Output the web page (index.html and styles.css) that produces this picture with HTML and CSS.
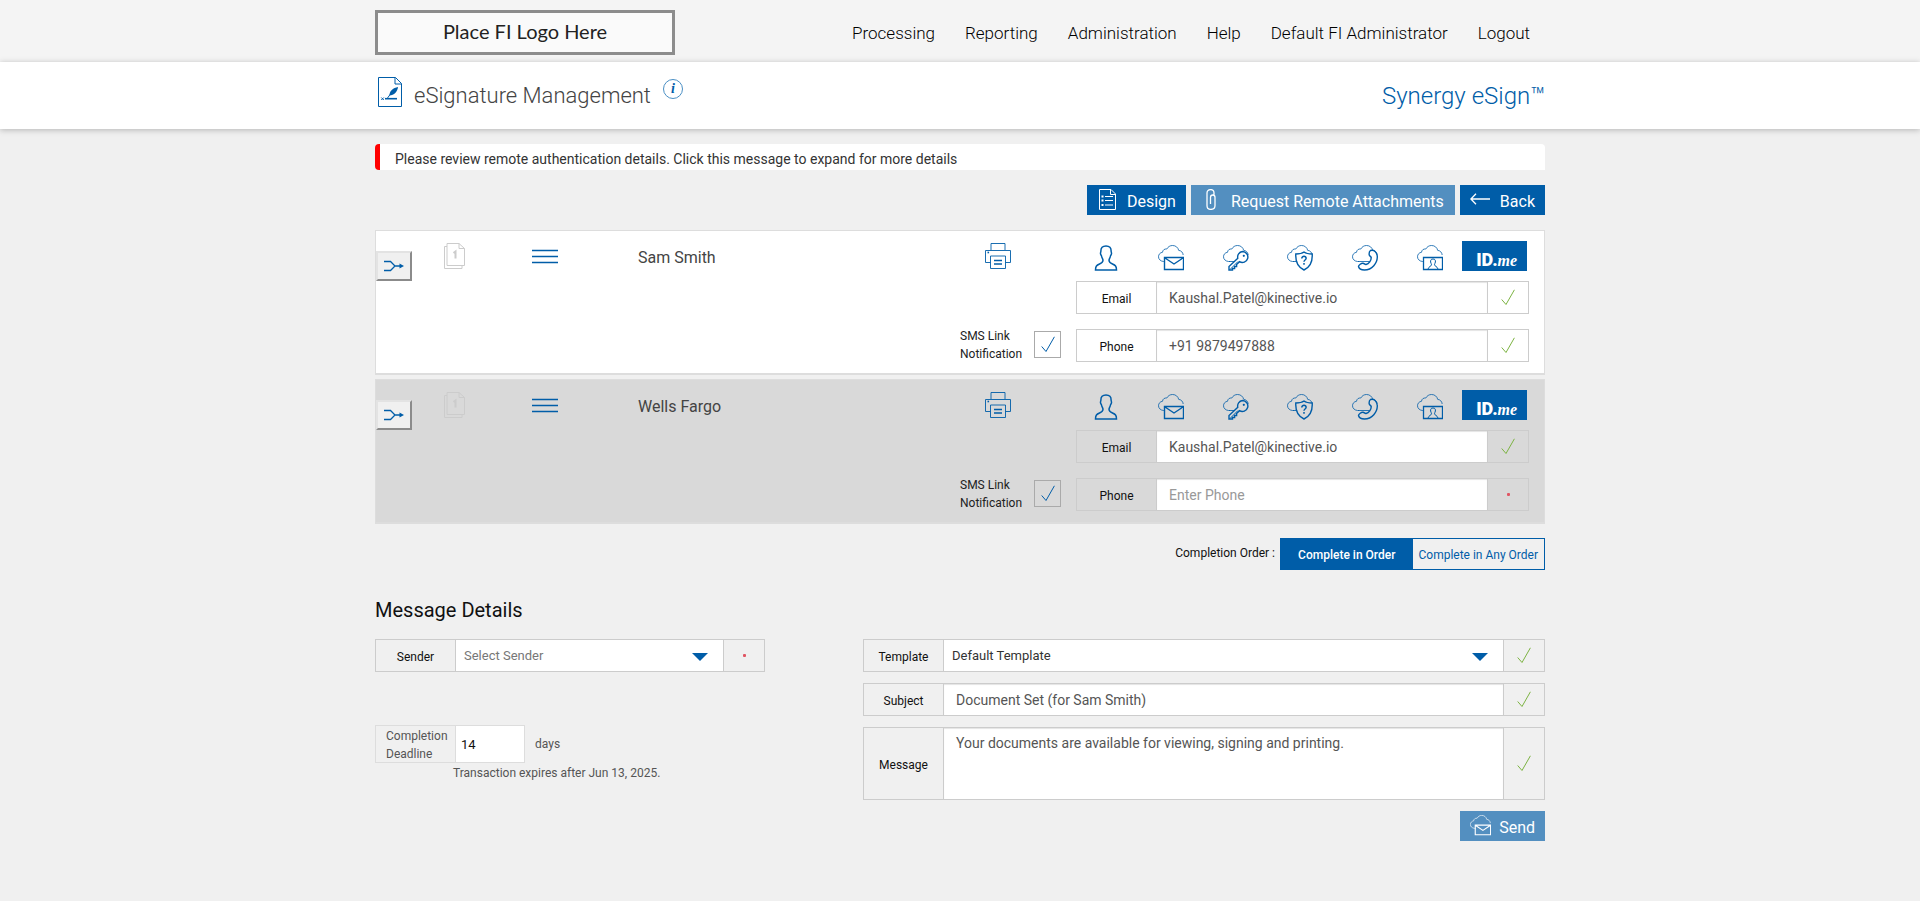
FILE: index.html
```html
<!DOCTYPE html>
<html lang="en">
<head>
  <meta charset="UTF-8" />
  <title>eSignature Management</title>
  <meta name="viewport" content="width=device-width, initial-scale=1.0" />
  <link rel="stylesheet" href="styles.css">
</head>
<body>
  <!-- shared icons -->
  <svg class="sprite" aria-hidden="true">
    <symbol id="i-cloud" viewBox="0 0 26 26">
      <path d="M7 16.500H5.500C2.500 16.200.5 14.200.5 11.800c0-2.400 1.700-4.300 4-4.500C4.700 5 6.500 3.700 8.800 4 10 1.800 12 .5 14.500.5c3.200 0 5.600 2 6.200 4.900 2.500.2 4.200 2 4.500 4.600" stroke-width=".8"/>
    </symbol>
    <symbol id="i-check" viewBox="0 0 14 17">
      <path d="M.7 10.500 5 15.500 13.400.8"/>
    </symbol>
    <symbol id="i-merge" viewBox="0 0 20 12">
      <path d="M0 1.500h6.500L11 6l-4.500 4.500H0M11 6h6"/>
      <path d="M15.500 3.500 20 6l-4.500 2.500z" fill="currentColor" stroke="none"/>
    </symbol>
    <symbol id="i-pages" viewBox="0 0 21 26">
      <path d="M3 3.500H.5v22h17.500V23M3 .5h12l5.500 5V22.500H3zM15 .5v5h5.500"/>
      <path d="M9.500 10l2-1.500v7" stroke-width="2"/>
    </symbol>
    <symbol id="i-lines" viewBox="0 0 26 15">
      <path d="M0 1.500h26M0 7.500h26M0 13.500h26" stroke-width="1.500"/>
    </symbol>
    <symbol id="i-print" viewBox="0 0 26 26">
      <path d="M6 7V.5h14V7M5.500 19.500h-5v-12h25v12h-5M5.500 13h15v12.500h-15z" stroke-width=".9"/>
      <path d="M9 17.500h8M9 21h8" stroke-width="1.400"/>
      <path d="M2.500 9.500h1.600" stroke-width="1.600"/>
    </symbol>
    <symbol id="i-person" viewBox="0 0 26 26">
      <path d="M13 1C9.500 1 7.800 2.800 7.900 6c0 1-.5 1.500-.4 2.800.1 1 .9 1.400 1 2.200.3 2 1.500 3 1.500 4.300 0 2.200-1.300 2.800-3.500 3.700-2.800 1.200-4 2-4 6h21c0-4-1.200-4.800-4-6-2.200-.9-3.500-1.500-3.500-3.700 0-1.300 1.200-2.300 1.500-4.300.1-.8.9-1.200 1-2.200.1-1.300-.4-1.800-.4-2.800C18.200 2.800 16.500 1 13 1z" stroke-width="1.500"/>
    </symbol>
    <symbol id="i-mail" viewBox="0 0 26 26">
      <use href="#i-cloud"/>
      <path d="M6.500 12.500h19v12h-19zM7 13l9 6 9-6" stroke-width="1.400"/>
    </symbol>
    <symbol id="i-key" viewBox="0 0 26 26">
      <use href="#i-cloud"/>
      <path d="M6 16.500h7" stroke-width=".8"/>
      <path d="M19.500 6.500a5.500 5.500 0 1 1-3 10.200L13.600 19.500v2h-2v2H9.500v1.500H6v-3.500l8.800-8.200A5.500 5.500 0 0 1 19.500 6.500z" stroke-width="1.400" fill="var(--icon-bg)"/>
      <path d="M7 24.500 15 16.500" stroke-width="1"/>
      <circle cx="20.800" cy="10.800" r="1.100" fill="currentColor" stroke="none"/>
    </symbol>
    <symbol id="i-shield" viewBox="0 0 26 26">
      <use href="#i-cloud"/>
      <path d="M6 16.500h5" stroke-width=".8"/>
      <path d="M17 7c2 1.500 5 2 8.200 2 .5 8-1.700 13-8.200 16C10.500 22 8.300 17 8.800 9 12 9 15 8.500 17 7z" stroke-width="1.400" fill="var(--icon-bg)"/>
      <path d="M14.800 13.500c0-3 4.600-2.800 4.300 0-.2 1.600-2.100 1.500-2.100 3.300M17 18v1.800" stroke-width="1.500"/>
    </symbol>
    <symbol id="i-phone" viewBox="0 0 26 26">
      <use href="#i-cloud"/>
      <path d="M6 16.500h12" stroke-width=".8"/>
      <path d="M18.500 5.500c3.500-1 6.500 1.500 6.800 6C25.500 18 20 25 12.500 25c-3 0-5.500-1.300-6-3.500 0-1.500 3-3.500 4.500-3.300 1.300.2 1.800 1.500 3 1.300 3-.7 5.300-4 5.200-7-.2-1-1.700-1.300-2-2.700-.2-1.500.3-3.500 1.300-4.300z" stroke-width="1.400" fill="var(--icon-bg)"/>
    </symbol>
    <symbol id="i-idcard" viewBox="0 0 26 26">
      <use href="#i-cloud"/>
      <path d="M6.500 12.500h19v12h-19z" stroke-width="1.300"/>
      <path d="M16 14c-2 0-2.600 1.200-2.400 3 .2 1.200.9 1.800.9 2.800 0 1.500-2.500 1.200-3.500 4.200M16 14c2 0 2.600 1.200 2.400 3-.2 1.200-.9 1.800-.9 2.800 0 1.500 2.500 1.200 3.500 4.200"/>
    </symbol>
    <symbol id="i-sign" viewBox="0 0 24 30">
      <path d="M.5.5h17l6 6v23H.500zM17 .5V7h6.500"/>
      <path d="M7 21.700h12" stroke-width="1.600"/>
      <path d="M3.300 20.500l2.500 2.500M5.800 20.500 3.300 23M9.500 21 14 15"/>
      <path d="M11.500 17.500C12 13.500 15 11 20 10c-.5 5-4 8-8.500 8.500z" fill="currentColor" stroke="none"/>
    </symbol>
    <symbol id="i-design" viewBox="0 0 17 21">
      <path d="M.5.500h11.500l4.500 4.500v15.500H.500zM11.500.5v5h5"/>
      <path d="M6 7.500h8M6 11.500h8M6 16h8" stroke-width="1.200"/>
      <path d="M2.500 7.500h2M2.500 11.500h2M2.500 16h2" stroke-width="2"/>
    </symbol>
    <symbol id="i-clip" viewBox="0 0 10 21">
      <path d="M8 6V4C8 2 7 .6 4.800.6S1 2 1 4v12.500c0 2.400 1.400 3.900 3.700 3.900S9 19 9 16.500V8.300C9 6.800 8.100 6 6.800 6S4.500 6.800 4.500 8.300V15" stroke-width="1.300"/>
    </symbol>
    <symbol id="i-back" viewBox="0 0 20 12">
      <path d="M6 .8.900 6 6 11.200M1 6h19" stroke-width="1.300"/>
    </symbol>
  </svg>

  <header class="topbar">
    <div class="container topbar-row">
      <div class="logo">Place FI Logo Here</div>
      <nav class="menu">
        <a href="#">Processing</a>
        <a href="#">Reporting</a>
        <a href="#">Administration</a>
        <a href="#">Help</a>
        <a href="#">Default FI Administrator</a>
        <a href="#">Logout</a>
      </nav>
    </div>
  </header>

  <div class="titlebar">
    <div class="container title-row">
      <svg class="icon icon-sign"><use href="#i-sign"/></svg>
      <h1>eSignature Management</h1>
      <button class="info" type="button" aria-label="Information">i</button>
      <div class="product">Synergy eSign™</div>
    </div>
  </div>

  <main class="container">
    <button class="alert" type="button">Please review remote authentication details. Click this message to expand for more details</button>

    <div class="actions">
      <button class="btn" type="button"><svg class="icon icon-design"><use href="#i-design"/></svg>Design</button>
      <button class="btn btn-light btn-attach" type="button"><svg class="icon icon-clip"><use href="#i-clip"/></svg>Request Remote Attachments</button>
      <button class="btn btn-back" type="button"><svg class="icon icon-back"><use href="#i-back"/></svg>Back</button>
    </div>

    <section class="signer">
      <button class="merge" type="button" aria-label="Merge"><svg class="icon icon-merge"><use href="#i-merge"/></svg></button>
      <svg class="icon icon-pages"><use href="#i-pages"/></svg>
      <svg class="icon icon-lines"><use href="#i-lines"/></svg>
      <div class="signer-name">Sam Smith</div>
      <div class="signer-options">
        <button class="icon-btn print" type="button" aria-label="Print"><svg class="icon icon-26"><use href="#i-print"/></svg></button>
        <div class="sms">
          <label for="sms1">SMS Link Notification</label>
          <span class="tick"><input type="checkbox" id="sms1" checked /><svg class="icon icon-check"><use href="#i-check"/></svg></span>
        </div>
      </div>
      <div class="signer-auth">
        <div class="auth-types">
          <button class="icon-btn" type="button" aria-label="In person"><svg class="icon icon-26"><use href="#i-person"/></svg></button>
          <button class="icon-btn" type="button" aria-label="Email"><svg class="icon icon-26"><use href="#i-mail"/></svg></button>
          <button class="icon-btn" type="button" aria-label="Password"><svg class="icon icon-26"><use href="#i-key"/></svg></button>
          <button class="icon-btn" type="button" aria-label="Security question"><svg class="icon icon-26"><use href="#i-shield"/></svg></button>
          <button class="icon-btn" type="button" aria-label="Phone"><svg class="icon icon-26"><use href="#i-phone"/></svg></button>
          <button class="icon-btn" type="button" aria-label="Identity card"><svg class="icon icon-26"><use href="#i-idcard"/></svg></button>
          <button class="idme" type="button">ID.<i>me</i></button>
        </div>
        <div class="field">
          <label for="email1">Email</label>
          <input type="text" id="email1" value="Kaushal.Patel@kinective.io" />
          <span class="status"><svg class="icon icon-check"><use href="#i-check"/></svg></span>
        </div>
        <div class="field">
          <label for="phone1">Phone</label>
          <input type="text" id="phone1" value="+91 9879497888" />
          <span class="status"><svg class="icon icon-check"><use href="#i-check"/></svg></span>
        </div>
      </div>
    </section>

    <section class="signer signer-grey">
      <button class="merge" type="button" aria-label="Merge"><svg class="icon icon-merge"><use href="#i-merge"/></svg></button>
      <svg class="icon icon-pages"><use href="#i-pages"/></svg>
      <svg class="icon icon-lines"><use href="#i-lines"/></svg>
      <div class="signer-name">Wells Fargo</div>
      <div class="signer-options">
        <button class="icon-btn print" type="button" aria-label="Print"><svg class="icon icon-26"><use href="#i-print"/></svg></button>
        <div class="sms">
          <label for="sms2">SMS Link Notification</label>
          <span class="tick"><input type="checkbox" id="sms2" checked /><svg class="icon icon-check"><use href="#i-check"/></svg></span>
        </div>
      </div>
      <div class="signer-auth">
        <div class="auth-types">
          <button class="icon-btn" type="button" aria-label="In person"><svg class="icon icon-26"><use href="#i-person"/></svg></button>
          <button class="icon-btn" type="button" aria-label="Email"><svg class="icon icon-26"><use href="#i-mail"/></svg></button>
          <button class="icon-btn" type="button" aria-label="Password"><svg class="icon icon-26"><use href="#i-key"/></svg></button>
          <button class="icon-btn" type="button" aria-label="Security question"><svg class="icon icon-26"><use href="#i-shield"/></svg></button>
          <button class="icon-btn" type="button" aria-label="Phone"><svg class="icon icon-26"><use href="#i-phone"/></svg></button>
          <button class="icon-btn" type="button" aria-label="Identity card"><svg class="icon icon-26"><use href="#i-idcard"/></svg></button>
          <button class="idme" type="button">ID.<i>me</i></button>
        </div>
        <div class="field">
          <label for="email2">Email</label>
          <input type="text" id="email2" value="Kaushal.Patel@kinective.io" />
          <span class="status"><svg class="icon icon-check"><use href="#i-check"/></svg></span>
        </div>
        <div class="field">
          <label for="phone2">Phone</label>
          <input type="text" id="phone2" placeholder="Enter Phone" />
          <span class="status"><span class="dot"></span></span>
        </div>
      </div>
    </section>

    <div class="order">
      <span class="order-label">Completion Order :</span>
      <div class="toggle">
        <button class="active" type="button">Complete in Order</button>
        <button type="button">Complete in Any Order</button>
      </div>
    </div>

    <h2>Message Details</h2>
    <div class="message">
      <div class="message-left">
        <div class="field">
          <label for="sender">Sender</label>
          <div class="select muted">
            <select id="sender"><option>Select Sender</option></select>
          </div>
          <span class="status"><span class="dot"></span></span>
        </div>
        <div class="deadline">
          <div class="deadline-box">
            <label for="days">Completion Deadline</label>
            <input type="text" id="days" value="14" />
          </div>
          <span>days</span>
        </div>
        <p class="expires">Transaction expires after Jun 13, 2025.</p>
      </div>
      <div class="message-right">
        <div class="field">
          <label for="template">Template</label>
          <div class="select">
            <select id="template"><option>Default Template</option></select>
          </div>
          <span class="status"><svg class="icon icon-check"><use href="#i-check"/></svg></span>
        </div>
        <div class="field">
          <label for="subject">Subject</label>
          <input type="text" id="subject" value="Document Set (for Sam Smith)" />
          <span class="status"><svg class="icon icon-check"><use href="#i-check"/></svg></span>
        </div>
        <div class="field field-tall">
          <label for="body">Message</label>
          <textarea id="body">Your documents are available for viewing, signing and printing.</textarea>
          <span class="status"><svg class="icon icon-check"><use href="#i-check"/></svg></span>
        </div>
        <button class="btn btn-light btn-send" type="button"><svg class="icon icon-send"><use href="#i-mail"/></svg>Send</button>
      </div>
    </div>
  </main>
</body>
</html>
```
FILE: styles.css
```css
* {
  box-sizing: border-box;
}

body {
  font-family: Roboto, 'Liberation Sans', sans-serif;
  font-size: 12px;
  line-height: 18px;
  margin: 0;
  background: #f0f0f0;
  color: #111;
}

button, input, select, textarea {
  font-family: inherit;
  margin: 0;
}

button {
  cursor: pointer;
  padding: 0;
}

.sprite {
  position: absolute;
  width: 0;
  height: 0;
}

.icon {
  display: block;
  flex: none;
  fill: none;
  stroke: currentColor;
  color: #005da8;
}

.icon-26 { width: 26px; height: 26px; }
.icon-sign { width: 24px; height: 30px; }
.icon-design { width: 17px; height: 21px; }
.icon-clip { width: 10px; height: 21px; }
.icon-back { width: 20px; height: 12px; }
.icon-send { width: 21px; height: 21px; }
.icon-merge { width: 20px; height: 12px; stroke-width: 1.3; }
.icon-check { width: 14px; height: 17px; }

.container {
  max-width: 1170px;
  margin: 0 auto;
}

/* header */
.topbar {
  background: #f4f4f4;
}

.topbar-row {
  display: flex;
  justify-content: space-between;
  align-items: center;
  height: 62px;
  padding-top: 3px;
}

.logo {
  width: 300px;
  height: 45px;
  border: 3px solid #8c8c8c;
  background: #fafafa;
  color: #222;
  font-family: Lato, sans-serif;
  font-size: 20px;
  line-height: 36px;
  text-align: center;
}

.menu {
  display: flex;
}

.menu a {
  padding: 0 15px;
  color: #000;
  font-size: 17px;
  font-weight: 300;
  line-height: 24px;
  text-decoration: none;
}

.titlebar {
  background: #fff;
  box-shadow: 0 1px 6px rgba(0, 0, 0, 0.25);
}

.title-row {
  display: flex;
  align-items: flex-start;
  height: 67px;
  padding: 15px 0 0 3px;
}

h1, .product {
  margin: 5px 0 0 12px;
  font-size: 24px;
  font-weight: 300;
  line-height: 28px;
}

h1 {
  color: #444;
  font-size: 22px;
}

.product {
  margin-left: auto;
  color: #005da8;
}

.info {
  width: 20px;
  height: 20px;
  margin: 2px 0 0 12px;
  border: 1px solid #4a8fc4;
  border-radius: 50%;
  background: none;
  color: #005da8;
  font: italic bold 14px/18px 'Liberation Serif', serif;
}

.alert {
  display: block;
  width: 100%;
  height: 26px;
  margin: 15px 0;
  padding: 4px 15px 0;
  border: none;
  border-left: 5px solid #f00;
  border-radius: 4px 4px 0 4px;
  background: #fff;
  color: #333;
  font-size: 14px;
  line-height: 20px;
  text-align: left;
}

/* buttons */
.actions {
  display: flex;
  justify-content: flex-end;
  gap: 5px;
  margin-bottom: 15px;
}

.btn {
  display: flex;
  gap: 11px;
  height: 30px;
  padding: 4px 10px 0 12px;
  border: none;
  background: #005da8;
  color: #fff;
  font-size: 16px;
  line-height: 26px;
}

.btn .icon {
  --icon-bg: none;
  color: #fff;
}

.btn .icon-back {
  margin-top: 4px;
}

.btn-light {
  background: #538fc0;
}

.btn-attach {
  gap: 15px;
  padding-right: 11px;
  padding-left: 15px;
}

.btn-back, .btn-send {
  padding-left: 10px;
}

.btn-back {
  gap: 10px;
}

.btn-send {
  gap: 8px;
  margin-left: auto;
}

/* signers */
.signer {
  --icon-bg: #fff;
  display: grid;
  grid-template-columns: 68px 88px 106px 1fr 116px 453px;
  align-items: start;
  height: 145px;
  margin-bottom: 4px;
  padding-right: 15px;
  border: 1px solid #ddd;
  border-bottom-width: 2px;
  background: #fff;
}

.signer-grey {
  --icon-bg: #d9d9d9;
  background: #d9d9d9;
}

.merge {
  display: flex;
  align-items: center;
  justify-content: center;
  width: 36px;
  height: 30px;
  margin-top: 20px;
  border: 2px solid;
  border-color: #e3e3e3 #8b8b8b #8b8b8b #e3e3e3;
  background: #f0f0f0;
}

.icon-pages {
  width: 21px;
  height: 26px;
  margin-top: 12px;
  color: #ccc;
}

.icon-lines {
  width: 26px;
  height: 15px;
  margin-top: 18px;
}

.signer-name {
  margin-top: 17px;
  color: #444;
  font-size: 16px;
  line-height: 20px;
}

.icon-btn {
  display: flex;
  justify-content: center;
  border: none;
  background: none;
}

.print {
  margin: 12px 0 0 25px;
}

.sms {
  display: flex;
  align-items: center;
  gap: 10px;
  margin-top: 56px;
  color: #222;
}

.sms label {
  width: 64px;
  padding-top: 2px;
}

.tick {
  display: grid;
  place-items: center;
}

.tick > * {
  grid-area: 1 / 1;
}

.tick input {
  width: 27px;
  height: 27px;
  appearance: none;
  border: 1px solid #aaa;
}

.tick .icon {
  pointer-events: none;
}

.auth-types {
  display: grid;
  grid-template-columns: repeat(7, 1fr);
  align-items: end;
  margin: 10px 2px 10px -2px;
}

.idme {
  height: 30px;
  padding: 8px 0 0 4px;
  border: none;
  background: #005da8;
  color: #fff;
  font-size: 18px;
  font-weight: 900;
  line-height: 22px;
}

.idme i {
  font-family: 'Liberation Serif', serif;
  font-size: 16px;
  font-weight: bold;
}

/* form fields */
.field {
  display: flex;
  height: 33px;
  border: 1px solid #ccc;
}

.signer-auth .field {
  margin-bottom: 15px;
}

.field label {
  display: flex;
  flex: none;
  align-items: center;
  justify-content: center;
  width: 80px;
  padding-top: 2px;
  border-right: 1px solid #ccc;
}

.field input, .field textarea {
  flex: 1;
  min-width: 0;
  padding: 0 12px;
  border: none;
  background: #fff;
  box-shadow: inset 0 1px 1px #e4e4e4;
  color: #555;
  font-size: 14px;
}

.field textarea {
  padding-top: 5px;
  line-height: 20px;
  resize: none;
}

.field input::placeholder {
  color: #999;
}

.status {
  display: flex;
  flex: none;
  align-items: center;
  justify-content: center;
  width: 41px;
  border-left: 1px solid #ccc;
}

.status .icon {
  color: #7cb342;
}

.dot {
  width: 3px;
  height: 3px;
  border-radius: 1px;
  background: #e05563;
}

.select {
  position: relative;
  flex: 1;
}

.select::after {
  content: '';
  position: absolute;
  top: 13px;
  right: 15px;
  border: 8px solid transparent;
  border-top-color: #005da8;
  border-bottom: none;
  pointer-events: none;
}

.select select {
  width: 100%;
  height: 100%;
  padding: 0 8px;
  appearance: none;
  border: none;
  background: #fff;
  color: #333;
  font-size: 13px;
}

.select.muted select {
  color: #777;
}

.order {
  display: flex;
  justify-content: flex-end;
  gap: 5px;
  margin-top: 14px;
}

.order-label {
  margin-top: 6px;
}

.toggle {
  display: grid;
  grid-template-columns: 1fr 1fr;
  width: 265px;
  height: 32px;
  border: 1px solid #005da8;
}

.toggle button {
  padding-top: 2px;
  border: none;
  background: none;
  color: #005da8;
  font-size: 12px;
}

.toggle .active {
  background: #005da8;
  color: #fff;
  font-weight: 500;
}

/* message */
h2 {
  margin: 28px 0 17px;
  font-size: 20px;
  font-weight: 400;
  line-height: 24px;
}

.message {
  display: flex;
  justify-content: space-between;
}

.message-left {
  width: 390px;
}

.message-right {
  display: flex;
  flex-direction: column;
  gap: 11px;
  width: 682px;
}

.field-tall {
  height: 73px;
}

.deadline {
  display: flex;
  align-items: center;
  gap: 10px;
  margin-top: 53px;
  color: #555;
}

.deadline-box {
  display: flex;
  width: 150px;
  height: 38px;
  border: 1px solid #ddd;
}

.deadline-box label {
  width: 80px;
  padding: 1px 0 0 10px;
  border-right: 1px solid #ddd;
}

.deadline-box input {
  width: 68px;
  padding: 0 5px;
  border: none;
  background: #fff;
  color: #111;
  font-size: 13px;
}

.expires {
  margin: 1px 0 0 78px;
  color: #555;
}
```
